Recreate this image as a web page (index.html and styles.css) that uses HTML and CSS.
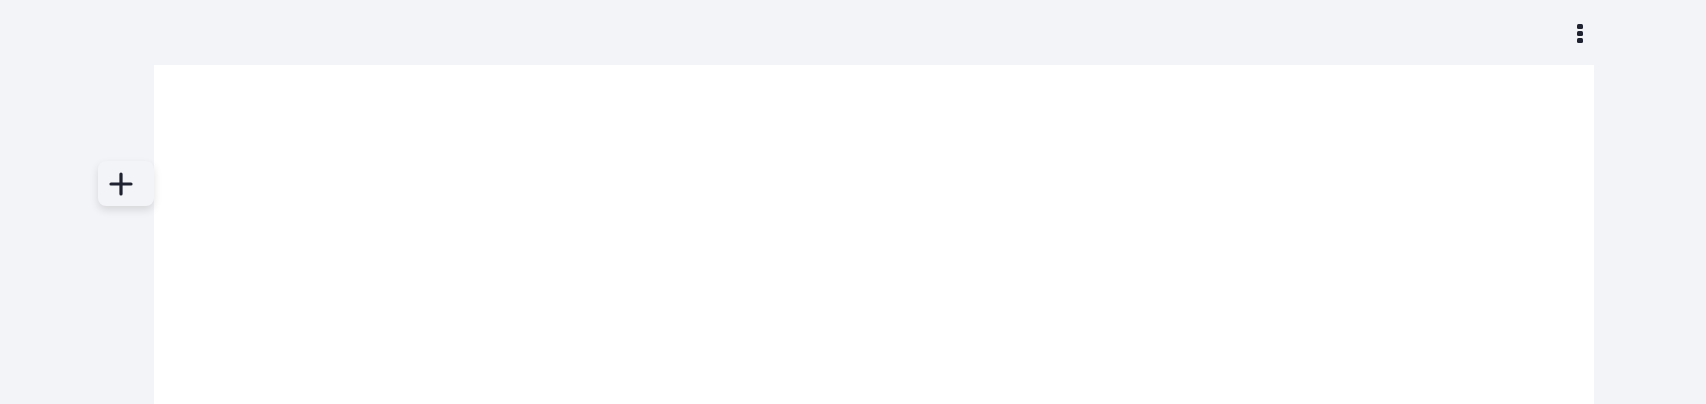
FILE: index.html
```html
<!DOCTYPE html>
<html lang="en">
<head>
    <meta charset="UTF-8">
    <meta name="viewport" content="width=device-width, initial-scale=1.0">
    <title>Editor</title>
    <link rel="stylesheet" href="styles.css">
</head>
<body>
    <header class="topbar">
        <button class="menu-button" aria-label="More options">
            <span class="dot"></span>
            <span class="dot"></span>
            <span class="dot"></span>
        </button>
    </header>

    <main class="workspace">
        <button class="add-block" aria-label="Add block">
            <svg width="24" height="24" viewBox="0 0 24 24" fill="none" stroke="#1f2230" stroke-width="3.2" stroke-linecap="round">
                <path d="M12 2v20M2 12h20"/>
            </svg>
        </button>
        <div class="page"></div>
    </main>
</body>
</html>
```

FILE: styles.css
```css
html, body {
    margin: 0;
    height: 100%;
}
body {
    font-family: "Inter", "Liberation Sans", sans-serif;
    background-color: #f3f4f7;
    overflow: hidden;
}
.topbar {
    height: 65px;
    display: flex;
    justify-content: flex-end;
    align-items: flex-start;
    padding-right: 123px;
    box-sizing: border-box;
}
.menu-button {
    margin-top: 24px;
    padding: 0;
    border: none;
    background: transparent;
    display: flex;
    flex-direction: column;
    gap: 2px;
    cursor: pointer;
}
.dot {
    display: block;
    width: 6px;
    height: 5px;
    border-radius: 1.5px;
    background-color: #1f2230;
}
.workspace {
    position: relative;
    padding-left: 154px;
    height: calc(100% - 65px);
}
.page {
    width: 1440px;
    height: 100%;
    background-color: #fff;
}
.add-block {
    position: absolute;
    left: 98px;
    top: 96px;
    width: 56px;
    height: 45px;
    padding: 0 10px 0 0;
    border: none;
    border-radius: 8px;
    background-color: #f3f4f7;
    box-shadow: 0 4px 8px rgba(0, 0, 0, 0.12);
    display: flex;
    align-items: center;
    justify-content: center;
    cursor: pointer;
}
```
